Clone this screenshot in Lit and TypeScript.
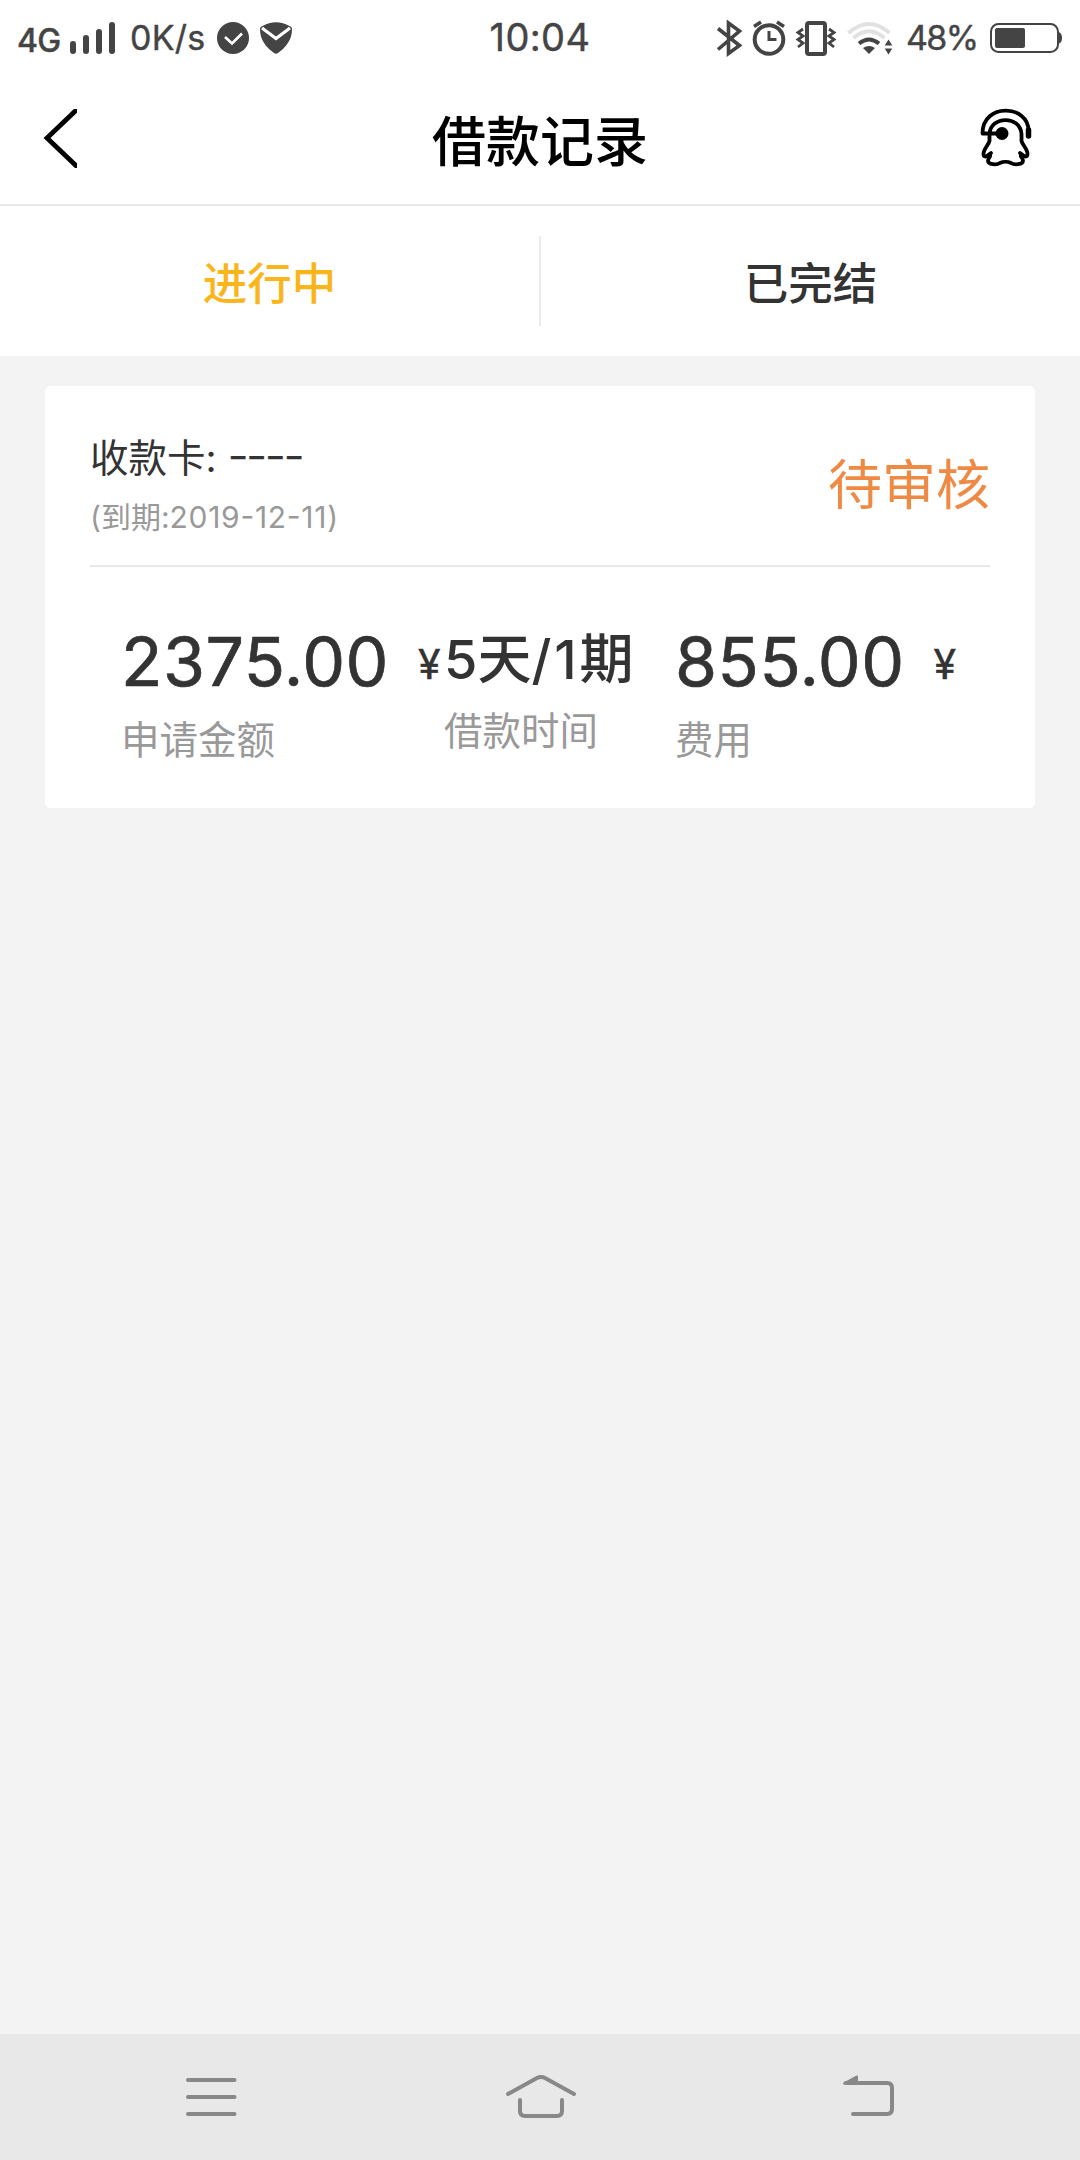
import { LitElement, html, css } from "lit";
import { customElement } from "lit/decorators.js";

@customElement("status-bar")
class StatusBar extends LitElement {
  static styles = css`
    :host { display: grid; grid-template-columns: 1fr auto 1fr; align-items: center; height: 72px; color: #444; font-size: 34px; line-height: 72px; white-space: nowrap; -webkit-text-stroke: 0.4px #444; }
    .side { display: flex; height: 72px; }
    .left { padding-left: 17px; }
    .right { justify-content: flex-end; }
    svg { display: block; flex: none; fill: none; stroke: #444; }
    .net { width: 49px; font-size: 32px; font-weight: 450; line-height: 77px; letter-spacing: -0.8px; }
    .speed { width: 84px; padding-left: 14px; line-height: 72px; letter-spacing: 0.2px; }
    .time { font-size: 38px; line-height: 75px; letter-spacing: 0.4px; }
    .pct { width: 83px; padding-left: 10px; line-height: 72px; box-sizing: border-box; letter-spacing: -1.6px; }
  `;
  render() {
    return html`
      <div class="side left">
        <span class="net">4G</span>
        <svg width="50" height="72" viewBox="66 0 50 72" stroke-width="6" stroke-linecap="round"><path d="M73 42v7M86 36v13M99 30v19M112 23v26" /></svg>
        <span class="speed">0K/s</span>
        <svg width="84" height="72" viewBox="214 0 84 72">
          <circle cx="233" cy="36" r="16" fill="#444" stroke="none" />
          <path d="M225 35l7 6.500 10-10" stroke="#fff" stroke-width="2.600" />
          <path d="M260 27q0-2 2-2.800 14-8 28 0 2 .8 2 2.800c0 9-4 15-9 20l-5 4q-2 1.500-4 0l-5-4c-5-5-9-11-9-20z" fill="#444" stroke="none" />
          <path d="M262 26l14 10.500 14-10.500" stroke="#fff" stroke-width="3.200" />
        </svg>
      </div>
      <span class="time">10:04</span>
      <div class="side right">
        <svg width="196" height="72" viewBox="700 0 196 72" stroke-width="4">
          <path d="M718 26.500L739.500 43.500 728.500 51.500V21L739.500 29 718 47.500" stroke-width="3.600" />
          <circle cx="769" cy="37.500" r="14.300" />
          <path d="M769 29v8.500h7.500" stroke-width="3" /><path d="M754 24.500l7-4.500M777 20l7 4.500" stroke-width="3.500" />
          <rect x="807" y="21" width="18" height="31" rx="2" />
          <path d="M803 27l-5 3.500 5 3.500-5 3.500 5 3.500-5 4M829 27l5 3.500-5 3.500 5 3.500-5 3.500 5 4" stroke-width="2.800" />
          <path d="M848.500 31q20.500-18 41 0" stroke="#e1e1e1" stroke-width="4" />
          <path d="M853.500 36q15.500-13.500 31 0" stroke="#e1e1e1" stroke-width="4" />
          <path d="M859 41.500q10-8 20 0" />
          <path d="M863 46q6-4 12 0l-6 6z" fill="#444" stroke="none" />
          <path d="M888.500 37.500l3.800 6h-7.600zM888.500 52.500l3.800-6h-7.600z" fill="#444" stroke="none" />
        </svg>
        <span class="pct">48%</span>
        <svg width="101" height="72" viewBox="979 0 101 72">
          <rect x="991" y="22" width="67" height="28" rx="7.500" stroke-width="2" />
          <rect x="995" y="26" width="30" height="20" rx="2" fill="#444" stroke="none" />
          <path d="M1059 30q3 1.500 3 6t-3 5.500z" fill="#444" stroke="none" />
        </svg>
      </div>`;
  }
}

@customElement("system-nav")
class SystemNav extends LitElement {
  static styles = css`
    :host { display: grid; grid-template-columns: 1fr auto 1fr; align-items: center; height: 126px; padding: 0 182px; background: #e8e8e8; }
    svg { display: block; fill: none; stroke: #888; stroke-width: 4; stroke-linecap: round; stroke-linejoin: round; }
    .end { justify-self: end; }
  `;
  render() {
    return html`
      <svg width="58" height="60" viewBox="182 2067 58 60"><path d="M188 2080h46.500M188 2097h46.500M188 2114h46.500" /></svg>
      <svg width="76" height="60" viewBox="502 2067 76 60"><path d="M508 2094L537 2078q4-2 8 0L574 2094M520 2100v11q0 5 5 5h32q5 0 5-5v-11" /></svg>
      <svg class="end" width="58" height="60" viewBox="840 2067 58 60"><path d="M846 2083h41q5 0 5 5v21q0 5-5 5h-34" /><path d="M844 2083.500l13-7v7z" fill="#888" stroke-width="2" /></svg>`;
  }
}

@customElement("app-root")
class AppRoot extends LitElement {
  static styles = css`
    :host { display: flex; flex-direction: column; height: 2160px; overflow: hidden; background: #f3f3f3; color: #333; font-family: Inter, "Noto Sans CJK SC", sans-serif; }
    .header { display: grid; grid-template-columns: 1fr auto 1fr; align-items: center; height: 132px; background: #fff; border-bottom: 2px solid #e8e8e8; }
    .title { margin: 0; font-size: 54px; line-height: 60px; font-weight: 500; color: #000; padding-top: 9px; }
    .back { margin-left: 40px; }
    .service { justify-self: end; margin-right: 41px; }
    svg { display: block; fill: none; stroke: #000; }
    status-bar { background: #fff; }
    .tabs { display: flex; align-items: center; height: 150px; background: #fff; font-size: 44.500px; font-weight: 500; }
    .tab { flex: 1; text-align: center; line-height: 60px; padding-top: 6px; }
    .active { color: #fbb51c; }
    .rule { width: 2px; height: 90px; background: #ebebeb; }
    .card { margin: 30px 45px; padding: 0 45px; height: 422px; box-sizing: border-box; background: #fff; border-radius: 5px; }
    .top { display: flex; justify-content: space-between; height: 179px; border-bottom: 2px solid #e8e8e8; }
    .account { padding-top: 46px; font-size: 38.500px; line-height: 52px; }
    .due { font-size: 30px; line-height: 67px; color: #999; }
    .date { font-feature-settings: "case"; letter-spacing: 0.7px; }
    .dash { font-size: 47px; line-height: 0; font-weight: 300; letter-spacing: -2.600px; font-feature-settings: "case"; position: relative; top: 3px; -webkit-text-stroke: 0.4px #333; }
    .state { font-size: 54px; line-height: 60px; padding-top: 66px; color: #ee8a43; font-family: "Noto Sans CJK SC", sans-serif; }
    .figures { display: grid; grid-template-columns: 323px 231px 1fr; padding-left: 32px; white-space: nowrap; }
    .value { display: flex; align-items: baseline; height: 80px; padding-top: 54px; }
    .amount { font-size: 68px; line-height: 80px; margin-left: -1px; letter-spacing: 0.5px; -webkit-text-stroke: 0.7px #333; }
    .yen { font-size: 41px; margin-left: 29px; position: relative; top: -7px; -webkit-text-stroke: 0.5px #333; }
    .term { font-size: 54px; line-height: 78px; font-weight: 500; margin-left: -1px; }
    .num { font-weight: 450; letter-spacing: 2.800px; }
    .first { font-weight: 450; }
    .label { font-size: 38.500px; line-height: 52px; color: #999; margin-top: 13px; margin-left: -1px; }
    .mid .label { margin-top: 4px; margin-left: -1px; }
    .fill { flex: 1; }
  `;
  render() {
    return html`
      <status-bar></status-bar>
      <header class="header">
        <svg class="back" width="37" height="59" viewBox="40 108.500 37 59"><path d="M80 106L47 137.500 80 169" stroke-width="4.800" /></svg>
        <h1 class="title">借款记录</h1>
        <svg class="service" width="60" height="70" viewBox="980 103 60 70" stroke-linejoin="round" stroke-linecap="round" stroke-width="3.800">
          <path d="M983.500 133.500c0-31 46-29 46-3M983.500 133.500h17" />
          <path d="M1029.500 130v6" stroke-width="5.500" />
          <circle cx="1003" cy="133.500" r="6.500" fill="#000" stroke="none" />
          <path d="M990.500 134c1-18.500 31-18.500 32 0v7c1 4 6 8 6 13 0 3-2.500 3-4 1.500l-3.500-2.500M990.500 134v7c-1 4-6 8-6 13 0 3 2.500 3 4 1.500l3.500-2.500" />
          <path d="M991 155c1 2-2 2.500-2 5.500 0 4.500 9 4.500 12 2.500 3-1.500 8-1.500 11 0 3 2 12 2 12-2.500 0-3-3-3.500-2-5.500" />
        </svg>
      </header>
      <nav class="tabs"><span class="tab active">进行中</span><i class="rule"></i><span class="tab">已完结</span></nav>
      <section class="card">
        <div class="top">
          <div class="account">收款卡: <span class="dash">----</span><div class="due">(到期:<span class="date">2019-12-11</span>)</div></div>
          <span class="state">待审核</span>
        </div>
        <div class="figures">
          <div><div class="value"><span class="amount">2375.00</span><span class="yen">¥</span></div><div class="label">申请金额</div></div>
          <div class="mid"><div class="value"><span class="term"><span class="first">5</span>天<span class="num">/1</span>期</span></div><div class="label">借款时间</div></div>
          <div><div class="value"><span class="amount">855.00</span><span class="yen">¥</span></div><div class="label">费用</div></div>
        </div>
      </section>
      <div class="fill"></div>
      <system-nav></system-nav>`;
  }
}
